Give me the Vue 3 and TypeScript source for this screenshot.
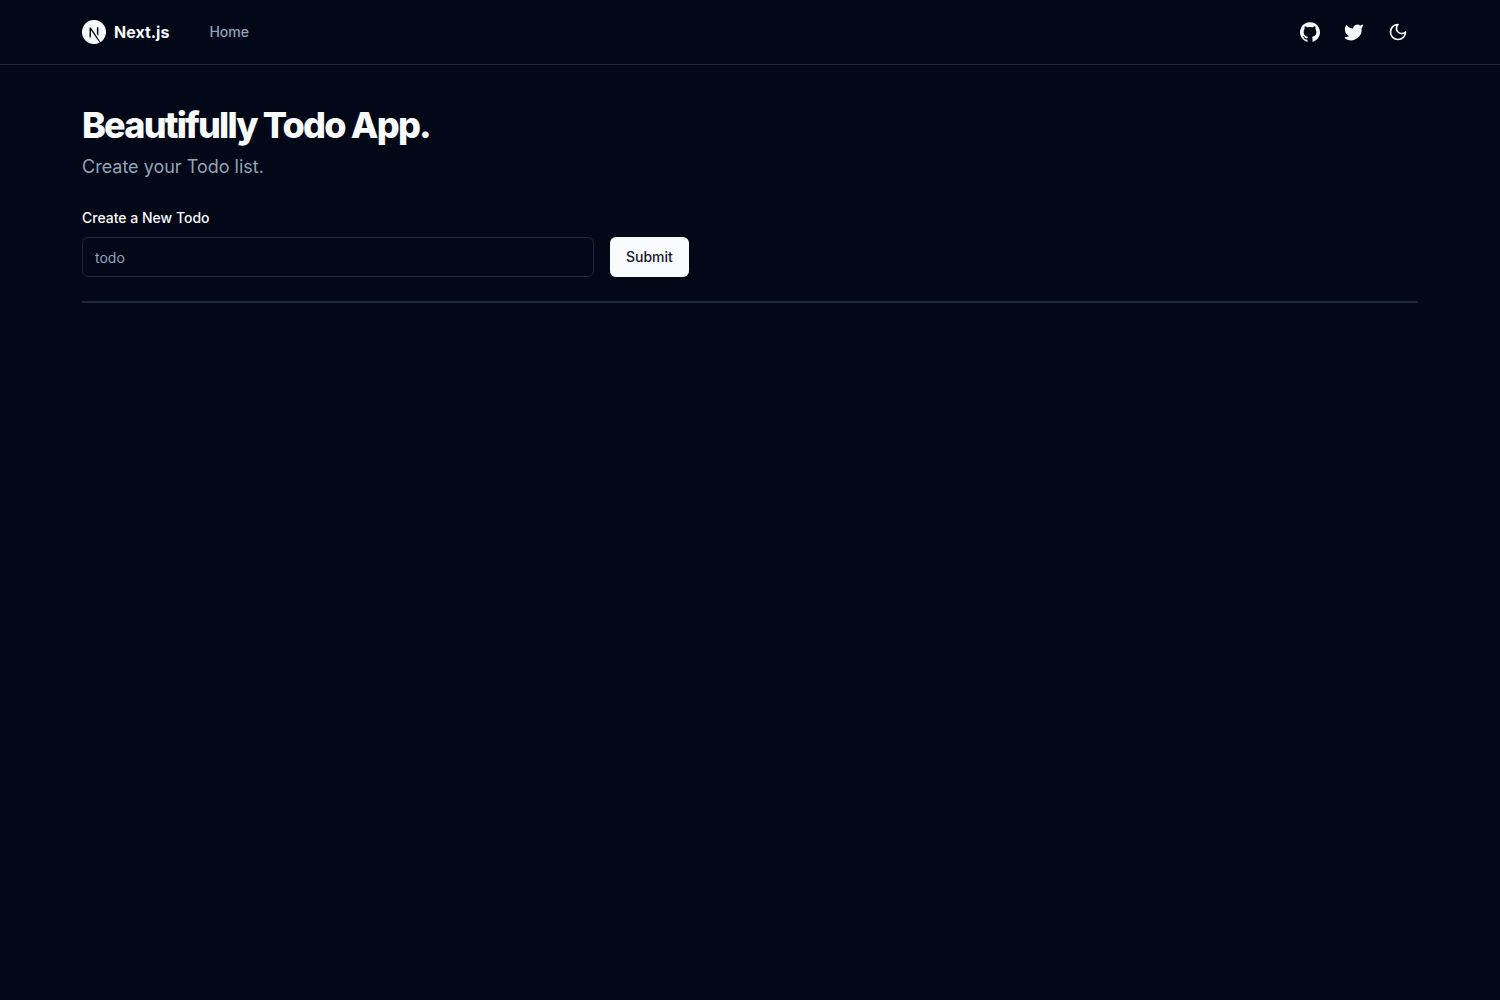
<script setup lang="ts">
import { ref } from 'vue'

const todo = ref('')
const todos = ref<string[]>([])

function addTodo(): void {
  const text = todo.value.trim()
  if (!text) return
  todos.value.push(text)
  todo.value = ''
}
</script>

<template>
  <div class="page">
    <header class="site-header">
      <div class="container header-row">
        <nav class="main-nav">
          <a href="/" class="brand">
            <svg class="logo" viewBox="0 0 24 24" fill="currentColor" aria-hidden="true">
              <path d="M11.572 0c-.176 0-.31.001-.358.007a19.76 19.76 0 0 1-.364.033C7.443.346 4.25 2.185 2.228 5.012a11.875 11.875 0 0 0-2.119 5.243c-.096.659-.108.854-.108 1.747s.012 1.089.108 1.748c.652 4.506 3.86 8.292 8.209 9.695.779.25 1.6.422 2.534.525.363.04 1.935.04 2.299 0 1.611-.178 2.977-.577 4.323-1.264.207-.106.247-.134.219-.158-.02-.013-.9-1.193-1.955-2.62l-1.919-2.592-2.404-3.558a338.739 338.739 0 0 0-2.422-3.556c-.009-.002-.018 1.579-.023 3.51-.007 3.38-.01 3.515-.052 3.595a.426.426 0 0 1-.206.214c-.075.037-.14.044-.495.044H7.81l-.108-.068a.438.438 0 0 1-.157-.171l-.05-.106.006-4.703.007-4.705.072-.092a.645.645 0 0 1 .174-.143c.096-.047.134-.051.54-.051.478 0 .558.018.682.154.035.038 1.337 1.999 2.895 4.361a10760.433 10760.433 0 0 0 4.735 7.17l1.9 2.879.096-.063a12.317 12.317 0 0 0 2.466-2.163 11.944 11.944 0 0 0 2.824-6.134c.096-.66.108-.854.108-1.748 0-.893-.012-1.088-.108-1.747-.652-4.506-3.859-8.292-8.208-9.695a12.597 12.597 0 0 0-2.499-.523A33.119 33.119 0 0 0 11.573 0zm4.069 7.217c.347 0 .408.005.486.047a.473.473 0 0 1 .237.277c.018.06.023 1.365.018 4.304l-.006 4.218-.744-1.14-.746-1.14v-3.066c0-1.982.01-3.097.023-3.15a.478.478 0 0 1 .233-.296c.096-.05.13-.054.5-.054z" />
            </svg>
            <span>Next.js</span>
          </a>
          <a href="/" class="nav-link">Home</a>
        </nav>
        <div class="actions">
          <a href="#github" class="icon-button" aria-label="GitHub">
            <svg class="icon" viewBox="0 0 438.549 438.549" fill="currentColor" aria-hidden="true">
              <path d="M409.132 114.573c-19.608-33.596-46.205-60.194-79.798-79.8-33.598-19.607-70.277-29.408-110.063-29.408-39.781 0-76.472 9.804-110.063 29.408-33.596 19.605-60.192 46.204-79.8 79.8C9.803 148.168 0 184.854 0 224.63c0 47.78 13.94 90.745 41.827 128.906 27.884 38.164 63.906 64.572 108.063 79.227 5.14.954 8.945.283 11.419-1.996 2.475-2.282 3.711-5.14 3.711-8.562 0-.571-.049-5.708-.144-15.417a2549.81 2549.81 0 01-.144-25.406l-6.567 1.136c-4.187.767-9.469 1.092-15.846 1-6.374-.089-12.991-.757-19.842-1.999-6.854-1.231-13.229-4.086-19.13-8.559-5.898-4.473-10.085-10.328-12.56-17.556l-2.855-6.57c-1.903-4.374-4.899-9.233-8.992-14.559-4.093-5.331-8.232-8.945-12.419-10.848l-1.999-1.431c-1.332-.951-2.568-2.098-3.711-3.429-1.142-1.331-1.997-2.663-2.568-3.997-.572-1.335-.098-2.43 1.427-3.289 1.525-.859 4.281-1.276 8.28-1.276l5.708.853c3.807.763 8.516 3.042 14.133 6.851 5.614 3.806 10.229 8.754 13.846 14.842 4.38 7.806 9.657 13.754 15.846 17.847 6.184 4.093 12.419 6.136 18.699 6.136 6.28 0 11.704-.476 16.274-1.423 4.565-.952 8.848-2.383 12.847-4.285 1.713-12.758 6.377-22.559 13.988-29.41-10.848-1.14-20.601-2.857-29.264-5.14-8.658-2.286-17.605-5.996-26.835-11.14-9.235-5.137-16.896-11.516-22.985-19.126-6.09-7.614-11.088-17.61-14.987-29.979-3.901-12.374-5.852-26.648-5.852-42.826 0-23.035 7.52-42.637 22.557-58.817-7.044-17.318-6.379-36.732 1.997-58.24 5.52-1.715 13.706-.428 24.554 3.853 10.85 4.283 18.794 7.952 23.84 10.994 5.046 3.041 9.089 5.618 12.135 7.708 17.705-4.947 35.976-7.421 54.818-7.421s37.117 2.474 54.823 7.421l10.849-6.849c7.419-4.57 16.18-8.758 26.262-12.565 10.088-3.805 17.802-4.853 23.134-3.138 8.562 21.509 9.325 40.922 2.279 58.24 15.036 16.18 22.559 35.787 22.559 58.817 0 16.178-1.958 30.497-5.853 42.966-3.9 12.471-8.941 22.457-15.125 29.979-6.191 7.521-13.901 13.85-23.131 18.986-9.232 5.14-18.182 8.85-26.84 11.136-8.662 2.286-18.415 4.004-29.263 5.146 9.894 8.562 14.842 22.077 14.842 40.539v60.237c0 3.422 1.19 6.279 3.572 8.562 2.379 2.279 6.136 2.95 11.276 1.995 44.163-14.653 80.185-41.062 108.068-79.226 27.88-38.161 41.825-81.126 41.825-128.906-.01-39.771-9.818-76.454-29.414-110.049z" />
            </svg>
          </a>
          <a href="#twitter" class="icon-button" aria-label="Twitter">
            <svg class="icon stroked" viewBox="0 0 24 24" fill="currentColor" aria-hidden="true">
              <path d="M22 4s-.7 2.1-2 3.4c1.6 10-9.4 17.3-18 11.6 2.2.1 4.4-.6 6-2C3 15.5.5 9.6 3 5c2.2 2.6 5.6 4.1 9 4-.9-4.2 4-6.6 7-3.8 1.1 0 3-1.2 3-1.2z" />
            </svg>
          </a>
          <button type="button" class="icon-button" aria-label="Toggle theme">
            <svg class="icon stroked" viewBox="0 0 24 24" fill="none" aria-hidden="true">
              <path d="M12 3a6 6 0 0 0 9 9 9 9 0 1 1-9-9Z" />
            </svg>
          </button>
        </div>
      </div>
    </header>

    <main class="container content">
      <div class="intro">
        <h1>Beautifully Todo App.</h1>
        <p>Create your Todo list.</p>
      </div>
      <form class="todo-form" @submit.prevent="addTodo">
        <label for="todo">Create a New Todo</label>
        <div class="field-row">
          <input id="todo" v-model="todo" type="text" placeholder="todo" autocomplete="off" />
          <button type="submit" class="submit">Submit</button>
        </div>
      </form>
      <hr />
      <ul v-if="todos.length" class="todo-list">
        <li v-for="(item, index) in todos" :key="index">{{ item }}</li>
      </ul>
    </main>
  </div>
</template>

<style>
body {
  margin: 0;
  background: #020817;
}
</style>

<style scoped>
.page {
  min-height: 100vh;
  background: #020817;
  color: #f8fafc;
  font-family: Inter, "Liberation Sans", sans-serif;
  font-size: 16px;
  line-height: 24px;
  -webkit-font-smoothing: antialiased;
}

.page *,
.page {
  box-sizing: border-box;
}

.container {
  width: 100%;
  max-width: 1400px;
  margin: 0 auto;
  padding: 0 32px;
}

.site-header {
  border-bottom: 1px solid #1e293b;
}

.header-row {
  display: flex;
  align-items: center;
  justify-content: space-between;
  height: 64px;
}

.main-nav {
  display: flex;
  align-items: center;
  gap: 40px;
}

.brand {
  display: flex;
  align-items: center;
  gap: 8px;
  color: inherit;
  font-weight: 700;
  text-decoration: none;
}

.logo {
  width: 24px;
  height: 24px;
}

.nav-link {
  color: #94a3b8;
  font-size: 14px;
  font-weight: 500;
  line-height: 20px;
  text-decoration: none;
}

.actions {
  display: flex;
  align-items: center;
  gap: 4px;
}

.icon-button {
  display: flex;
  align-items: center;
  justify-content: center;
  width: 40px;
  height: 40px;
  padding: 0;
  border: 0;
  border-radius: 6px;
  background: transparent;
  color: inherit;
  cursor: pointer;
}

.icon {
  width: 20px;
  height: 20px;
}

.stroked {
  stroke: currentColor;
  stroke-width: 2;
  stroke-linecap: round;
  stroke-linejoin: round;
}

.content {
  display: flex;
  flex-direction: column;
  gap: 24px;
  padding-top: 40px;
  padding-bottom: 40px;
}

.intro {
  display: flex;
  flex-direction: column;
  gap: 8px;
}

h1 {
  margin: 0;
  font-size: 36px;
  font-weight: 800;
  line-height: 40px;
  letter-spacing: -0.05em;
}

p {
  margin: 0;
  color: #94a3b8;
  font-size: 18px;
  line-height: 28px;
}

.todo-form {
  display: flex;
  flex-direction: column;
  gap: 6px;
}

label {
  font-size: 14px;
  font-weight: 500;
  line-height: 26px;
}

.field-row {
  display: flex;
  gap: 16px;
}

input {
  flex: 0 1 512px;
  min-width: 0;
  height: 40px;
  padding: 8px 12px;
  border: 1px solid #1e293b;
  border-radius: 6px;
  background: transparent;
  color: inherit;
  font: inherit;
  font-size: 14px;
}

input::placeholder {
  color: #94a3b8;
  opacity: 1;
}

.submit {
  height: 40px;
  padding: 8px 16px;
  border: 0;
  border-radius: 6px;
  background: #f8fafc;
  color: #0f172a;
  font: inherit;
  font-size: 14px;
  font-weight: 500;
  cursor: pointer;
}

hr {
  width: 100%;
  height: 2px;
  margin: 0;
  border: 0;
  background: #1e293b;
}

.todo-list {
  margin: 0;
  padding: 0;
  list-style: none;
}
</style>
